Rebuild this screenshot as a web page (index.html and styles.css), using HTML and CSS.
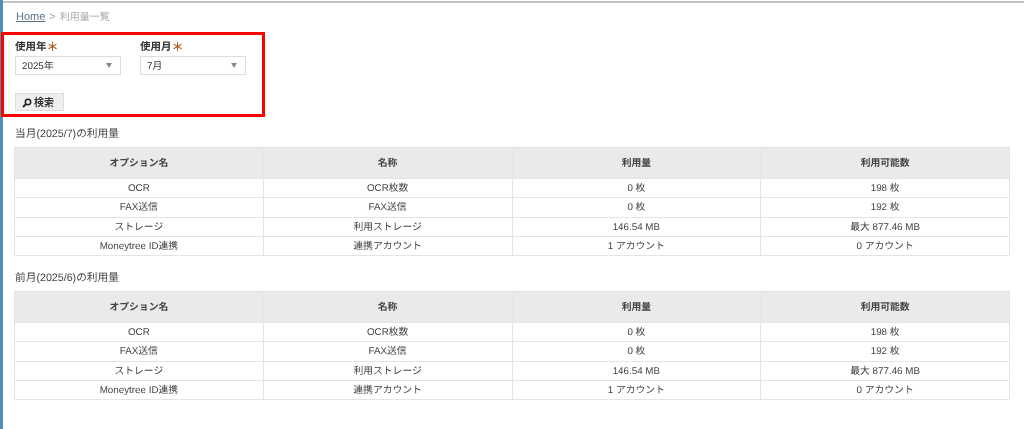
FILE: index.html
```html
<!DOCTYPE html>
<html lang="ja">
<head>
<meta charset="utf-8">
<title>利用量一覧</title>
<link rel="stylesheet" href="styles.css">
</head>
<body>
<div class="page">
  <div class="rail"></div>
  <main class="main">
    <nav class="crumbs"><a href="#">Home</a><span class="sep">&gt;</span><span class="here">利用量一覧</span></nav>
    <form class="filter">
      <div class="fields">
        <div class="field">
          <label class="label">使用年<span class="req">＊</span></label>
          <div class="select"><span>2025年</span><i class="caret"></i></div>
        </div>
        <div class="field">
          <label class="label">使用月<span class="req">＊</span></label>
          <div class="select"><span>7月</span><i class="caret"></i></div>
        </div>
      </div>
      <button type="button" class="btn">
        <svg width="10" height="10" viewBox="0 0 10 10"><circle cx="6" cy="4" r="2.7" fill="none" stroke="#222" stroke-width="1.5"/><path d="M4 6 1 9" stroke="#222" stroke-width="1.8"/></svg>検索</button>
    </form>
    <h2 class="title">当月(2025/7)の利用量</h2>
    <table class="usage">
      <thead><tr><th>オプション名</th><th>名称</th><th>利用量</th><th>利用可能数</th></tr></thead>
      <tbody>
        <tr><td>OCR</td><td>OCR枚数</td><td>0 枚</td><td>198 枚</td></tr>
        <tr><td>FAX送信</td><td>FAX送信</td><td>0 枚</td><td>192 枚</td></tr>
        <tr><td>ストレージ</td><td>利用ストレージ</td><td>146.54 MB</td><td>最大 877.46 MB</td></tr>
        <tr><td>Moneytree ID連携</td><td>連携アカウント</td><td>1 アカウント</td><td>0 アカウント</td></tr>
      </tbody>
    </table>
    <h2 class="title">前月(2025/6)の利用量</h2>
    <table class="usage">
      <thead><tr><th>オプション名</th><th>名称</th><th>利用量</th><th>利用可能数</th></tr></thead>
      <tbody>
        <tr><td>OCR</td><td>OCR枚数</td><td>0 枚</td><td>198 枚</td></tr>
        <tr><td>FAX送信</td><td>FAX送信</td><td>0 枚</td><td>192 枚</td></tr>
        <tr><td>ストレージ</td><td>利用ストレージ</td><td>146.54 MB</td><td>最大 877.46 MB</td></tr>
        <tr><td>Moneytree ID連携</td><td>連携アカウント</td><td>1 アカウント</td><td>0 アカウント</td></tr>
      </tbody>
    </table>
  </main>
</div>
<div class="highlight"></div>
</body>
</html>
```
FILE: styles.css
```css
* { box-sizing: border-box; }
html, body { margin: 0; height: 100%; background: #fff; overflow: hidden; }
body { font-family: "Liberation Sans", "Noto Sans CJK JP", sans-serif; font-size: 9.8px; color: #444; text-rendering: geometricPrecision; }
.page { display: flex; height: 429px; filter: blur(0.35px); }
.rail { width: 4px; background: #4f8db5; }
.main { flex: 1; border-top: 2px solid #c4c4c4; margin-top: 1px; padding: 0 14px 0 11px; }
.crumbs { height: 29px; display: flex; align-items: baseline; gap: 4px; font-size: 11px; line-height: 12px; color: #aaa; padding: 8px 0 0 2px; }
.crumbs a { color: #5a7184; text-decoration: underline; }
.here { font-size: 10px; }
.filter { height: 84px; padding: 8px 0 0 1px; }
.fields { display: flex; gap: 19px; }
.field { width: 106px; }
.label { display: flex; align-items: center; font-size: 10.5px; font-weight: 700; color: #333; height: 16px; padding-bottom: 2px; line-height: 14px; }
.req { color: #a8622a; font-size: 12px; font-weight: 700; line-height: 10px; }
.select { height: 19px; border: 1px solid #ddd; display: flex; align-items: center; justify-content: space-between; padding: 2px 8px 0 6px; font-size: 9.8px; line-height: 12px; color: #333; }
.caret { width: 0; height: 0; margin-top: -2px; border-left: 3px solid transparent; border-right: 3px solid transparent; border-top: 5px solid #888; }
.btn { display: flex; align-items: center; justify-content: center; gap: 2px; width: 49px; height: 18px; margin-top: 18px; padding: 1px 3px 0 0; border: 1px solid #ddd; background: #efefef; font: 700 10px/12px "Liberation Sans", "Noto Sans CJK JP", sans-serif; color: #333; }
.title { margin: 0; height: 31px; padding: 11px 0 0 1px; font-size: 10.7px; line-height: 14px; font-weight: 400; color: #444; }
.usage { width: 996px; border-collapse: collapse; table-layout: fixed; margin-bottom: 4px; line-height: 12px; }
.usage th, .usage td { border: 1px solid #e4e4e4; text-align: center; padding: 2px 0 0; }
.usage th { height: 31px; background: #ebe9ea; font-weight: 700; color: #444; }
.usage td { height: 19.25px; color: #444; }
.highlight { position: absolute; left: 1px; top: 32px; width: 264px; height: 85px; border: 3px solid #f00; }
```
